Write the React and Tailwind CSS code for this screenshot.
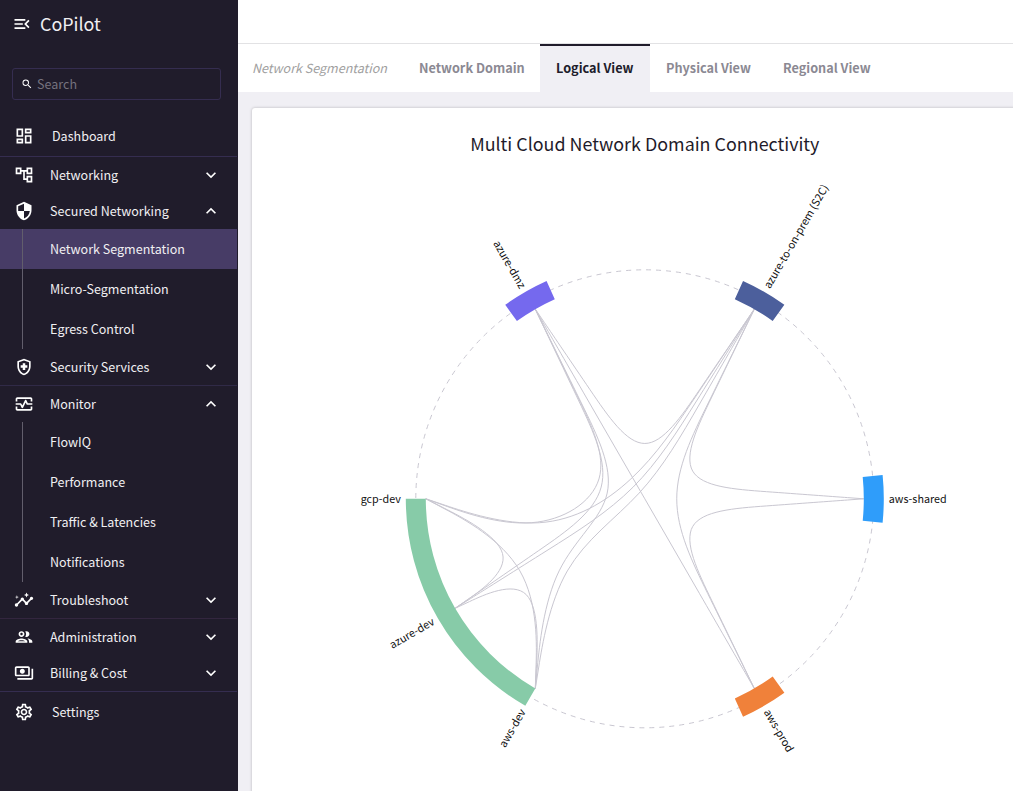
import React from "react";
import {
  MdMenuOpen,
  MdSearch,
  MdOutlineDashboard,
  MdOutlineAccountTree,
  MdSecurity,
  MdOutlineHealthAndSafety,
  MdOutlineMonitorHeart,
  MdInsights,
  MdOutlineGroup,
  MdOutlinePayments,
  MdOutlineSettings,
  MdKeyboardArrowDown,
  MdKeyboardArrowUp,
} from "react-icons/md";

const NAV = [
  { label: "Dashboard", icon: MdOutlineDashboard, link: true, height: "h-10 pb-0.5", line: "border-b border-[#352d50]" },
  { label: "Networking", icon: MdOutlineAccountTree, height: "h-9", line: "" },
  {
    label: "Secured Networking",
    icon: MdSecurity,
    height: "h-9",
    line: "",
    children: ["Network Segmentation", "Micro-Segmentation", "Egress Control"],
  },
  { label: "Security Services", icon: MdOutlineHealthAndSafety, height: "h-[37px]", line: "border-b border-[#302a47]" },
  {
    label: "Monitor",
    icon: MdOutlineMonitorHeart,
    height: "h-9",
    line: "",
    children: ["FlowIQ", "Performance", "Traffic & Latencies", "Notifications"],
  },
  { label: "Troubleshoot", icon: MdInsights, height: "h-[37px]", line: "border-b border-[#33263f]" },
  { label: "Administration", icon: MdOutlineGroup, height: "h-9", line: "" },
  { label: "Billing & Cost", icon: MdOutlinePayments, height: "h-[37px]", line: "border-b border-[#352d50]" },
  { label: "Settings", icon: MdOutlineSettings, link: true, height: "h-10", line: "" },
];

function NavItem({ item }) {
  const Icon = item.icon;
  const Chevron = item.children ? MdKeyboardArrowUp : MdKeyboardArrowDown;
  return (
    <>
      <div className={`flex w-[237px] items-center pr-4 pl-3.5 ${item.height} ${item.line}`}>
        <Icon className="size-5 text-white" />
        <span className={`flex-1 leading-5 ${item.link ? "ml-[18px]" : "ml-4"}`}>{item.label}</span>
        {!item.link && <Chevron className="size-5 text-white" />}
      </div>
      {item.children && (
        <div>
          {item.children.map((label) => (
            <div
              key={label}
              className={`flex h-10 w-[237px] pl-[22px] ${label === "Network Segmentation" ? "bg-[#473c66]" : ""}`}
            >
              <div className="flex flex-1 items-center border-l border-[#625e6c] pl-[27px] leading-5">{label}</div>
            </div>
          ))}
        </div>
      )}
    </>
  );
}

const CX = 644.8 - 252;
const CY = 498.8 - 108;
const LEAF = 219;
const OUTER = 239;

const polar = (deg, r) => {
  const a = (deg * Math.PI) / 180;
  return [CX + r * Math.cos(a), CY - r * Math.sin(a)];
};

const NODES = {
  shared: { label: "aws-shared", angle: 0, domain: 0 },
  s2c: { label: "azure-to-on-prem (S2C)", angle: 60, domain: 60 },
  dmz: { label: "azure-dmz", angle: 120, domain: 120 },
  gcp: { label: "gcp-dev", angle: 180, domain: 210 },
  azure: { label: "azure-dev", angle: 210, domain: 210 },
  aws: { label: "aws-dev", angle: 240, domain: 210 },
  prod: { label: "aws-prod", angle: 300, domain: 300 },
};

const LINKS = [
  ["dmz", "s2c"], ["dmz", "gcp"], ["dmz", "azure"], ["dmz", "aws"], ["dmz", "prod"],
  ["s2c", "gcp"], ["s2c", "azure"], ["s2c", "aws"], ["s2c", "shared"], ["s2c", "prod"],
  ["shared", "prod"], ["gcp", "azure"], ["gcp", "aws"], ["azure", "aws"],
];

const ARCS = [
  { from: -5.73, to: 5.73, color: "#2f9dfa" },
  { from: 54.27, to: 65.73, color: "#4c5f9c" },
  { from: 114.27, to: 125.73, color: "#7569ee" },
  { from: 180, to: 240, color: "#87cba8" },
  { from: 294.27, to: 305.73, color: "#f0813a" },
];

function arcPath({ from, to }) {
  const p = (d, r) => polar(d, r).map((v) => v.toFixed(2)).join(",");
  return `M${p(from, OUTER)}A${OUTER},${OUTER} 0 0 0 ${p(to, OUTER)}L${p(to, LEAF)}A${LEAF},${LEAF} 0 0 1 ${p(from, LEAF)}Z`;
}

// Bundled B-spline running leaf -> domain -> root -> domain -> leaf.
function linkPath([s, t], beta = 0.85) {
  const a = NODES[s];
  const b = NODES[t];
  const raw = [polar(a.angle, LEAF), polar(a.domain, LEAF / 2)];
  if (a.domain !== b.domain) raw.push([CX, CY], polar(b.domain, LEAF / 2));
  raw.push(polar(b.angle, LEAF));
  const n = raw.length - 1;
  const pts = raw.map((p, i) =>
    p.map((v, k) => beta * v + (1 - beta) * (raw[0][k] + (i / n) * (raw[n][k] - raw[0][k])))
  );
  const mix = (p, q, wp, wq) => p.map((v, k) => ((wp * v + wq * q[k]) / (wp + wq)).toFixed(2)).join(",");
  let d = `M${pts[0].join(",")}L${mix(pts[0], pts[1], 5, 1)}`;
  for (let i = 1; i <= n; i++) {
    const p = pts[i - 1];
    const q = pts[i];
    const r = pts[Math.min(i + 1, n)];
    const end = p.map((v, k) => ((v + 4 * q[k] + r[k]) / 6).toFixed(2)).join(",");
    d += `C${mix(p, q, 2, 1)} ${mix(p, q, 1, 2)} ${end}`;
  }
  return `${d}L${pts[n].join(",")}`;
}

function Chart() {
  return (
    <svg width="761" height="683" className="block" fontFamily="'Noto Sans CJK SC', sans-serif">
      <circle cx={CX} cy={CY} r="229" fill="none" stroke="#c9c7d1" strokeDasharray="5 5" />
      {LINKS.map((l) => (
        <path key={l.join()} d={linkPath(l)} fill="none" stroke="#c9c7d1" />
      ))}
      {ARCS.map((a) => (
        <path key={a.color} d={arcPath(a)} fill={a.color} />
      ))}
      {Object.values(NODES).map((n) => {
        const flip = n.angle > 90 && n.angle < 270;
        const [x, y] = polar(n.angle, OUTER + 5);
        return (
          <text
            key={n.label}
            transform={`translate(${x},${y}) rotate(${flip ? 180 - n.angle : -n.angle})`}
            textAnchor={flip ? "end" : "start"}
            dy="0.35em"
            fontSize="10.75"
            fill="#111"
          >
            {n.label}
          </text>
        );
      })}
      <text x="392.8" y="43" textAnchor="middle" fontSize="17.9" fill="#1f1b2a">
        Multi Cloud Network Domain Connectivity
      </text>
    </svg>
  );
}

export default function App() {
  return (
    <div className="flex h-[791px] w-[1013px] overflow-hidden bg-[#f0eff4] font-['Noto_Sans_CJK_SC',sans-serif] text-[12.54px] text-[#f0eff2]">
      <aside className="flex w-[238px] shrink-0 flex-col bg-[#201c2b]">
        <div className="flex h-12 items-center pl-3">
          <MdMenuOpen className="size-5 text-white" />
          <span className="mb-0.5 ml-2 text-[17.9px] leading-6">CoPilot</span>
        </div>
        <div className="mt-5 ml-3 flex h-8 w-[209px] items-center rounded-[3px] border border-[#352d50] pl-2">
          <MdSearch className="size-3 text-white" />
          <span className="ml-1 leading-5 text-[#75727e]">Search</span>
        </div>
        <nav className="mt-[17px]">
          {NAV.map((item) => (
            <NavItem key={item.label} item={item} />
          ))}
        </nav>
      </aside>
      <main className="flex flex-1 flex-col overflow-hidden">
        <div className="h-11 shrink-0 border-b border-[#e2e2e4] bg-white" />
        <div className="flex h-12 shrink-0 bg-white text-[12.7px] leading-[48px] font-bold whitespace-nowrap text-[#8b8993]">
          <span className="w-[165px] pl-3.5 text-[12.54px] font-normal text-[#a0a0a0] italic">Network Segmentation</span>
          <span className="w-[137px] pl-4">Network Domain</span>
          <span className="w-[110px] border-t-2 border-[#201c2b] bg-[#f0eff4] pl-4 leading-[44px] text-[#201c2b]">
            Logical View
          </span>
          <span className="w-[117px] pl-4">Physical View</span>
          <span className="pl-4">Regional View</span>
        </div>
        <section className="mt-4 ml-3.5 h-[700px] w-[780px] shrink-0 rounded-[3px] bg-white shadow-[0_0_3px_rgba(0,0,0,0.25)]">
          <Chart />
        </section>
      </main>
    </div>
  );
}
